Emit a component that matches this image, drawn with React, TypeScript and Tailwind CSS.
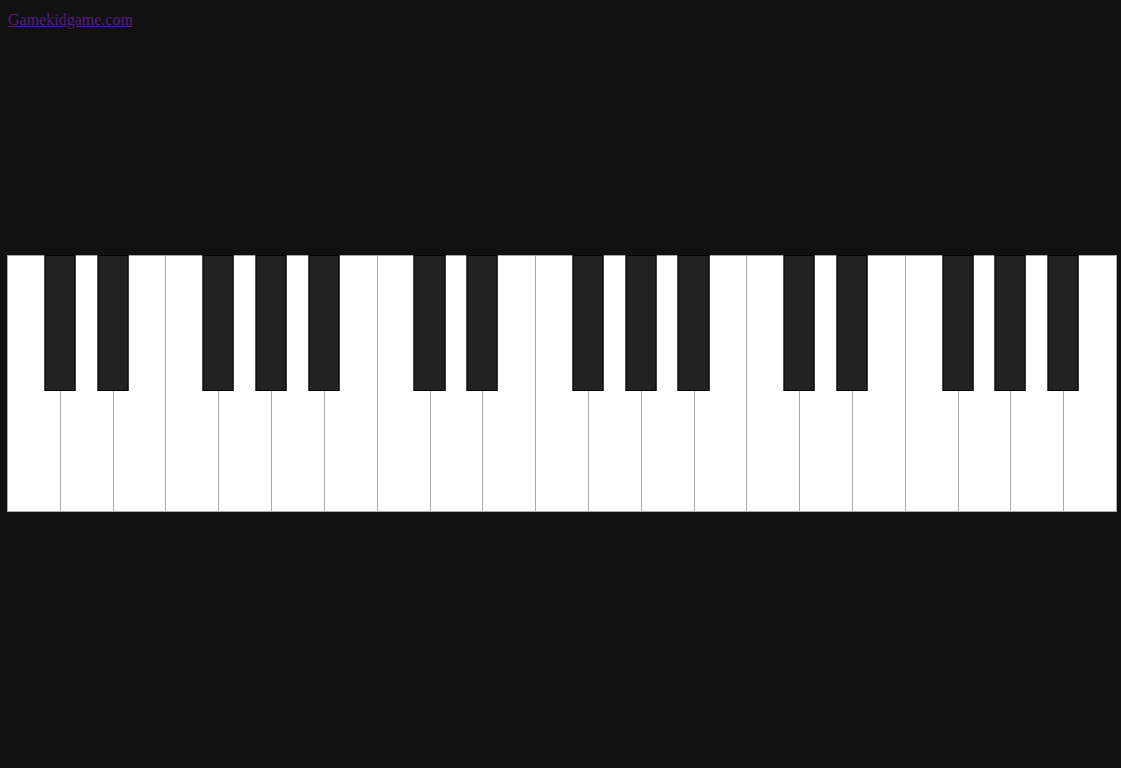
const pattern = ["C", "D", "E", "F", "G", "A", "B"];
const hasBlack = new Set(["C", "D", "F", "G", "A"]);

function WhiteKey({ note, last }: { note: string; last: boolean }) {
  return (
    <div
      className={
        "relative flex-1 bg-white " + (last ? "" : "border-r border-[#aaa]")
      }
    >
      {hasBlack.has(note) && !last && (
        <div className="absolute -top-px right-0 z-10 h-[136px] w-[60%] translate-x-1/2 border border-black bg-[#222]" />
      )}
    </div>
  );
}

export default function App() {
  const keys = [0, 1, 2].flatMap((o) => pattern.map((n) => `${n}${o}`));
  return (
    <div className="h-screen overflow-hidden bg-[#111] pt-[11px] font-['Liberation_Serif',serif]">
      <a
        href="#"
        className="ml-2 block h-[18px] w-fit text-base leading-[18px] text-[#551a8b] underline"
      >
        Gamekidgame.com
      </a>
      <div className="ml-[7px] mt-[226px] flex h-[257px] w-[1110px] border border-[#aaa]">
        {keys.map((k, i) => (
          <WhiteKey key={k} note={k[0]} last={i === keys.length - 1} />
        ))}
      </div>
    </div>
  );
}
